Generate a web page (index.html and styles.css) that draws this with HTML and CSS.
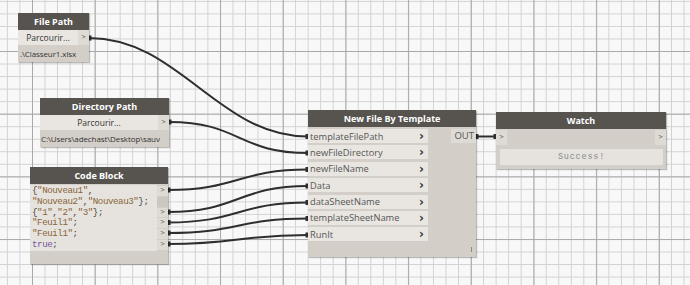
FILE: index.html
```html
<!DOCTYPE html>
<html lang="en">
<head>
  <meta charset="UTF-8" />
  <title>New File By Template</title>
  <link rel="stylesheet" href="styles.css">
</head>
<body>
<div class="canvas">

  <!-- wires sit under the nodes -->
  <svg class="wires" width="690" height="285" viewBox="0 0 690 285">
    <g fill="none" stroke="#2e2e2e" stroke-width="2">
      <path d="M89 38 C 179 38, 218 136.5, 308 136.5" />
      <path d="M169 122 C 240 122, 238 153, 308 153" />
      <path d="M168 190 C 238 190, 238 169.5, 308 169.5" />
      <path d="M168 212 C 238 212, 238 186, 308 186" />
      <path d="M168 222.5 C 238 222.5, 238 202.5, 308 202.5" />
      <path d="M168 233 C 238 233, 238 218.5, 308 218.5" />
      <path d="M168 244 C 238 244, 238 235, 308 235" />
      <path d="M476 136.5 L 496 136.5" />
    </g>
    <g fill="#2e2e2e">
      <rect x="89" y="35.5" width="2.5" height="5" />
      <rect x="169" y="119.5" width="2.5" height="5" />
      <rect x="168" y="187.5" width="2.5" height="5" />
      <rect x="168" y="209.5" width="2.5" height="5" />
      <rect x="168" y="220" width="2.5" height="5" />
      <rect x="168" y="230.5" width="2.5" height="5" />
      <rect x="168" y="241.5" width="2.5" height="5" />
      <rect x="305.5" y="134" width="2.5" height="5" />
      <rect x="305.5" y="150.5" width="2.5" height="5" />
      <rect x="305.5" y="167" width="2.5" height="5" />
      <rect x="305.5" y="183.5" width="2.5" height="5" />
      <rect x="305.5" y="200" width="2.5" height="5" />
      <rect x="305.5" y="216" width="2.5" height="5" />
      <rect x="305.5" y="232.5" width="2.5" height="5" />
      <rect x="476" y="134" width="2.5" height="5" />
      <rect x="493.5" y="134" width="2.5" height="5" />
    </g>
  </svg>

  <!-- File Path -->
  <div class="node node-file">
    <div class="node-title">File Path</div>
    <div class="browse-row">
      <div class="browse-btn">Parcourir...</div>
      <div class="port-out">&gt;</div>
    </div>
    <div class="node-value">.\Classeur1.xlsx</div>
  </div>

  <!-- Directory Path -->
  <div class="node node-dir">
    <div class="node-title">Directory Path</div>
    <div class="browse-row">
      <div class="browse-btn">Parcourir...</div>
      <div class="port-out">&gt;</div>
    </div>
    <div class="node-value">C:\Users\adechast\Desktop\sauv</div>
  </div>

  <!-- Code Block -->
  <div class="node node-code">
    <div class="node-title">Code Block</div>
    <div class="code-body">
      <div class="code-lines">
        <div><span class="p">{</span><span class="s">"Nouveau1"</span><span class="p">,</span></div>
        <div><span class="s">"Nouveau2"</span><span class="p">,</span><span class="s">"Nouveau3"</span><span class="p">};</span></div>
        <div><span class="p">{</span><span class="s">"1"</span><span class="p">,</span><span class="s">"2"</span><span class="p">,</span><span class="s">"3"</span><span class="p">};</span></div>
        <div><span class="s">"Feuil1"</span><span class="p">;</span></div>
        <div><span class="s">"Feuil1"</span><span class="p">;</span></div>
        <div><span class="k">true</span><span class="p">;</span></div>
      </div>
      <div class="code-ports">
        <div class="cport">&gt;</div>
        <div class="cport empty"></div>
        <div class="cport">&gt;</div>
        <div class="cport">&gt;</div>
        <div class="cport">&gt;</div>
        <div class="cport">&gt;</div>
      </div>
    </div>
  </div>

  <!-- New File By Template -->
  <div class="node node-template">
    <div class="node-title">New File By Template</div>
    <div class="template-body">
      <div class="inputs">
        <div class="input-row"><span>templateFilePath</span><b>&rsaquo;</b></div>
        <div class="input-row"><span>newFileDirectory</span><b>&rsaquo;</b></div>
        <div class="input-row"><span>newFileName</span><b>&rsaquo;</b></div>
        <div class="input-row"><span>Data</span><b>&rsaquo;</b></div>
        <div class="input-row"><span>dataSheetName</span><b>&rsaquo;</b></div>
        <div class="input-row"><span>templateSheetName</span><b>&rsaquo;</b></div>
        <div class="input-row"><span>RunIt</span><b>&rsaquo;</b></div>
      </div>
      <div class="outputs">
        <div class="output-row">OUT</div>
      </div>
    </div>
    <div class="resize-mark"></div>
  </div>

  <!-- Watch -->
  <div class="node node-watch">
    <div class="node-title">Watch</div>
    <div class="watch-ports">
      <div class="port-in">&gt;</div>
      <div class="port-out">&gt;</div>
    </div>
    <div class="watch-value">Success!</div>
  </div>

</div>
</body>
</html>
```

FILE: styles.css
```css
body {
  margin: 0;
  font-family: 'Open Sans', 'Noto Sans', sans-serif;
}
.canvas {
  position: relative;
  width: 690px;
  height: 285px;
  overflow: hidden;
  background-color: #f8f8f8;
  background-image:
    linear-gradient(to right, #a9a9a9 0, #a9a9a9 1.3px, transparent 1.3px),
    linear-gradient(to bottom, #a9a9a9 0, #a9a9a9 1.3px, transparent 1.3px),
    linear-gradient(to right, #d2d2d2 0, #d2d2d2 1.3px, transparent 1.3px),
    linear-gradient(to bottom, #d2d2d2 0, #d2d2d2 1.3px, transparent 1.3px);
  background-size: 62.7px 62.7px, 62.7px 62.7px, 12.54px 12.54px, 12.54px 12.54px;
  background-position: 32px 51px, 32px 51px, 6.9px 0.9px, 6.9px 0.9px;
}
.wires {
  position: absolute;
  left: 0;
  top: 0;
}

/* nodes are placed on the free canvas */
.node {
  position: absolute;
  background: #d3cfc8;
  box-shadow: 1px 1px 1px rgba(0, 0, 0, 0.25);
  color: #555;
}
.node-title {
  background: #575450;
  color: #fff;
  font-weight: 700;
  font-size: 9px;
  text-align: center;
  height: 17px;
  line-height: 17px;
}

.node-file { left: 18px; top: 13px; width: 71px; height: 49px; }
.node-dir { left: 40px; top: 98px; width: 129px; height: 49px; }
.node-code { left: 30px; top: 167px; width: 138px; height: 97px; }
.node-template { left: 308px; top: 110px; width: 168px; height: 147px; }
.node-watch { left: 496px; top: 112px; width: 170px; height: 57px; }

.browse-row {
  display: flex;
  height: 15px;
}
.browse-btn {
  flex: 1;
  background: #e9e6e1;
  color: #333;
  font-size: 8.5px;
  line-height: 15px;
  text-align: center;
}
.port-out, .port-in {
  width: 11px;
  background: #dedad4;
  color: #666;
  font-family: 'DejaVu Sans Mono', monospace;
  font-size: 7px;
  line-height: 15px;
  text-align: center;
}
.node-value {
  font-size: 8px;
  color: #333;
  padding: 3px 0 0 1px;
  white-space: nowrap;
  letter-spacing: -0.1px;
}
.node-file .node-value { padding-left: 2px; }

/* code block */
.code-body {
  display: flex;
  margin-top: 1px;
  background: #e6e3de;
  height: 66px;
}
.code-lines {
  flex: 1;
  padding: 1px 0 0 2px;
  font-family: 'Liberation Mono', monospace;
  font-size: 9.2px;
  letter-spacing: -0.45px;
  line-height: 10.8px;
}
.code-lines .s { color: #8a6339; }
.code-lines .p { color: #444; }
.code-lines .k { color: #7a56a3; }
.code-ports {
  width: 11px;
  background: #d3cfc8;
  padding-top: 1px;
}
.cport {
  height: 9.8px;
  margin-bottom: 1px;
  background: #dedad4;
  color: #666;
  font-family: 'DejaVu Sans Mono', monospace;
  font-size: 7px;
  line-height: 9.8px;
  text-align: center;
}
.cport.empty { background: #ccc8c1; }

/* template node */
.template-body {
  display: flex;
  padding-top: 2px;
}
.inputs {
  width: 120px;
  display: flex;
  flex-direction: column;
  gap: 2.4px;
}
.input-row {
  height: 14px;
  background: #e9e6e1;
  display: flex;
  justify-content: space-between;
  align-items: center;
  padding: 0 4px 0 2px;
  font-size: 9.3px;
  color: #555;
}
.input-row b {
  font-family: 'DejaVu Sans', sans-serif;
  font-size: 12px;
  color: #333;
}
.outputs {
  flex: 1;
  display: flex;
  justify-content: flex-end;
  align-items: flex-start;
}
.output-row {
  background: #dedad4;
  height: 14px;
  line-height: 14px;
  padding: 0 2px 0 3px;
  font-size: 9.5px;
  color: #555;
}
.resize-mark {
  position: absolute;
  right: 4px;
  bottom: 5px;
  width: 1px;
  height: 5px;
  background: #888;
}

/* watch node */
.watch-ports {
  display: flex;
  justify-content: space-between;
  height: 15px;
  margin-top: 1px;
}
.watch-value {
  margin: 4px 3px 0 4px;
  height: 16px;
  background: #e6e3de;
  color: #888;
  font-family: 'Liberation Mono', monospace;
  font-size: 8.5px;
  letter-spacing: 0.8px;
  line-height: 16px;
  text-align: center;
}
```
